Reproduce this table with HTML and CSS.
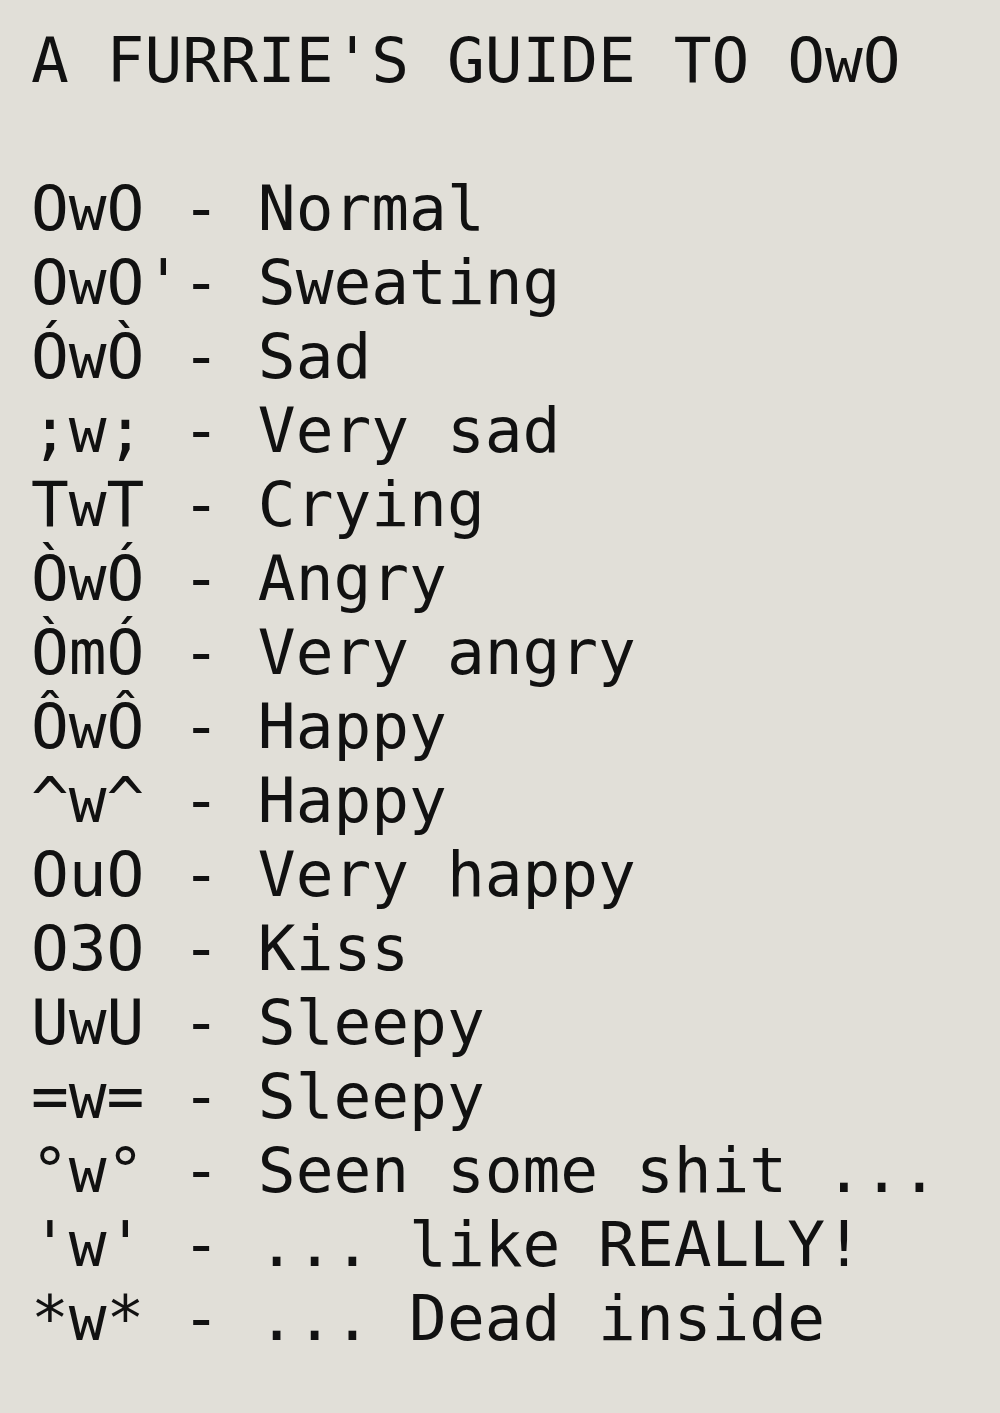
FILE: index.html
```html
<!DOCTYPE html>
<html>
<head>
<meta charset="utf-8">
<link rel="stylesheet" href="styles.css">
</head>
<body>
<main class="guide">
<h1 class="title">A FURRIE'S GUIDE TO OwO</h1>
<ul class="list">
<li class="row"><span class="face">OwO </span><span class="desc">- Normal</span></li>
<li class="row"><span class="face">OwO'</span><span class="desc">- Sweating</span></li>
<li class="row"><span class="face">ÓwÒ </span><span class="desc">- Sad</span></li>
<li class="row"><span class="face">;w; </span><span class="desc">- Very sad</span></li>
<li class="row"><span class="face">TwT </span><span class="desc">- Crying</span></li>
<li class="row"><span class="face">ÒwÓ </span><span class="desc">- Angry</span></li>
<li class="row"><span class="face">ÒmÓ </span><span class="desc">- Very angry</span></li>
<li class="row"><span class="face">ÔwÔ </span><span class="desc">- Happy</span></li>
<li class="row"><span class="face">^w^ </span><span class="desc">- Happy</span></li>
<li class="row"><span class="face">OuO </span><span class="desc">- Very happy</span></li>
<li class="row"><span class="face">O3O </span><span class="desc">- Kiss</span></li>
<li class="row"><span class="face">UwU </span><span class="desc">- Sleepy</span></li>
<li class="row"><span class="face">=w= </span><span class="desc">- Sleepy</span></li>
<li class="row"><span class="face">°w° </span><span class="desc">- Seen some shit ...</span></li>
<li class="row"><span class="face">'w' </span><span class="desc">- ... like REALLY!</span></li>
<li class="row"><span class="face">*w* </span><span class="desc">- ... Dead inside</span></li>
</ul>
</main>
</body>
</html>
```
FILE: styles.css
```css
html, body {
  margin: 0;
  padding: 0;
  background: #e1dfd8;
}
.guide {
  padding: 24px 0 0 31px;
  font-family: "DejaVu Sans Mono", "Liberation Mono", monospace;
  font-size: 62.8px;
  line-height: 74px;
  color: #111111;
}
.title {
  margin: 0 0 74px 0;
  font-size: inherit;
  font-weight: normal;
  line-height: inherit;
  white-space: pre;
}
.list {
  list-style: none;
  margin: 0;
  padding: 0;
}
.row {
  white-space: pre;
}
.face {
  white-space: pre;
}
.desc {
  white-space: pre;
}
```
